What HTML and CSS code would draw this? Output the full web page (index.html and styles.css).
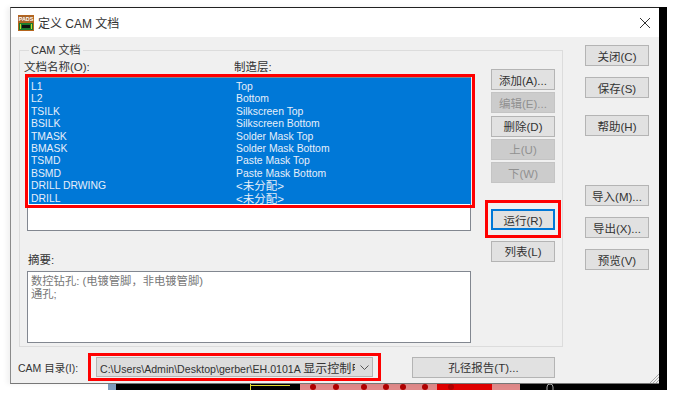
FILE: index.html
```html
<!DOCTYPE html>
<html lang="zh-CN">
<head>
  <meta charset="UTF-8">
  <meta name="viewport" content="width=device-width, initial-scale=1.0">
  <title>定义 CAM 文档</title>
  <link rel="stylesheet" href="styles.css">
</head>
<body>
<div class="screen">
  <div class="dialog">
    <div class="titlebar">
      <svg class="app-icon" width="16" height="16" viewBox="0 0 16 16">
        <rect width="16" height="16" fill="#b5651d"/>
        <rect x="1" y="1" width="14" height="6" fill="#a8642a"/>
        <text x="8" y="6" text-anchor="middle" font-size="5.4" font-weight="700" fill="#fff" font-family="Liberation Sans, sans-serif">PADS</text>
        <rect x="1" y="8" width="14" height="7" fill="#1c7a2c"/>
        <rect x="4" y="10" width="8" height="3" fill="#111"/>
        <rect x="2" y="9" width="1" height="5" fill="#c9d92e"/>
        <rect x="13" y="9" width="1" height="5" fill="#c9d92e"/>
      </svg>
      <span class="title">定义 CAM 文档</span>
      <svg class="close-x" width="10" height="10" viewBox="0 0 10 10">
        <path d="M0 0L10 10M10 0L0 10" stroke="#333" stroke-width="1" fill="none"/>
      </svg>
    </div>

    <div class="body">
      <div class="main">
        <fieldset class="group">
          <legend>CAM 文档</legend>
          <div class="group-inner">
            <div class="docs">
              <div class="list-heads">
                <span class="col-name">文档名称(O):</span>
                <span>制造层:</span>
              </div>
              <div class="list">
                <div class="rows">
                  <div class="row"><span class="col-name">L1</span><span>Top</span></div>
                  <div class="row"><span class="col-name">L2</span><span>Bottom</span></div>
                  <div class="row"><span class="col-name">TSILK</span><span>Silkscreen Top</span></div>
                  <div class="row"><span class="col-name">BSILK</span><span>Silkscreen Bottom</span></div>
                  <div class="row"><span class="col-name">TMASK</span><span>Solder Mask Top</span></div>
                  <div class="row"><span class="col-name">BMASK</span><span>Solder Mask Bottom</span></div>
                  <div class="row"><span class="col-name">TSMD</span><span>Paste Mask Top</span></div>
                  <div class="row"><span class="col-name">BSMD</span><span>Paste Mask Bottom</span></div>
                  <div class="row"><span class="col-name">DRILL DRWING</span><span class="cjk">&lt;未分配&gt;</span></div>
                  <div class="row"><span class="col-name">DRILL</span><span class="cjk">&lt;未分配&gt;</span></div>
                </div>
              </div>
              <div class="summary-label">摘要:</div>
              <div class="summary">
                <div>数控钻孔: (电镀管脚，非电镀管脚)</div>
                <div>通孔;</div>
              </div>
            </div>
            <div class="doc-buttons">
              <button class="btn">添加(A)...</button>
              <button class="btn" disabled>编辑(E)...</button>
              <button class="btn">删除(D)</button>
              <button class="btn" disabled>上(U)</button>
              <button class="btn" disabled>下(W)</button>
              <div class="run-mark"><button class="btn btn-default">运行(R)</button></div>
              <button class="btn">列表(L)</button>
            </div>
          </div>
        </fieldset>

        <div class="dir-row">
          <span class="dir-label">CAM 目录(I):</span>
          <div class="dir-mark">
            <div class="combo">
              <span class="combo-text">C:\Users\Admin\Desktop\gerber\EH.0101A <span class="combo-cjk">显示控制电路板</span></span>
              <svg width="9" height="5" viewBox="0 0 9 5"><path d="M0.5 0.5L4.5 4.5L8.5 0.5" stroke="#555" fill="none"/></svg>
            </div>
          </div>
          <button class="btn btn-report">孔径报告(T)...</button>
        </div>
      </div>

      <div class="side">
        <button class="btn">关闭(C)</button>
        <button class="btn">保存(S)</button>
        <button class="btn side-help">帮助(H)</button>
        <button class="btn side-io">导入(M)...</button>
        <button class="btn">导出(X)...</button>
        <button class="btn">预览(V)</button>
      </div>
    </div>

    <svg class="grip" width="10" height="10" viewBox="0 0 10 10">
      <path d="M1 10L10 1M4 10L10 4M7 10L10 7" stroke="#a8a8a8" fill="none"/>
    </svg>
  </div>

  <svg class="strip" width="657" height="6" viewBox="0 0 657 6">
    <rect width="98" height="6" fill="#fff"/>
    <rect x="98" width="8" height="6" fill="#7f9fc0"/>
    <rect x="240" width="1" height="6" fill="#e8e030"/>
    <rect x="240" y="1" width="40" height="1" fill="#e8e030"/>
    <rect x="290" width="220" height="6" fill="#e08a8a"/>
    <rect x="427" width="55" height="6" fill="#e00000"/>
    <g fill="#b00000">
      <circle cx="303" cy="3" r="3"/><circle cx="326" cy="3" r="3"/><circle cx="354" cy="3" r="3"/><circle cx="376" cy="3" r="3"/>
      <circle cx="393" cy="3" r="3"/><circle cx="415" cy="3" r="3"/><circle cx="441" cy="3" r="3"/>
    </g>
    <path d="M537 6V3Q537 0 540 0Q543 0 543 3V6" stroke="#aaa" fill="none"/>
  </svg>
</div>
</body>
</html>
```
FILE: styles.css
```css
body {
  margin: 0;
  background-color: #ffffff;
  font-family: "Liberation Sans", "Noto Sans CJK SC", sans-serif;
  font-size: 11.5px;
  color: #333333;
}
.screen {
  width: 657px;
  margin: 7px 0 0 10px;
  background-color: #000000;
}
.dialog {
  position: relative;
  width: 649px;
  box-sizing: border-box;
  background-color: #f0f0f0;
  border-top: 1px solid #222222;
  border-left: 1px solid #8a8a8a;
  border-bottom: 1px solid #777777;
  box-shadow: -3px 0 5px rgba(0, 0, 0, 0.06);
}
.titlebar {
  display: flex;
  align-items: center;
  height: 29px;
  padding-left: 7px;
  background-color: #ffffff;
}
.title {
  margin-left: 4px;
  font-size: 12px;
}
.close-x {
  margin-left: auto;
  margin-right: 9px;
}
.body {
  display: flex;
  padding: 7px 0 2px 8px;
}
.main {
  width: 544px;
}
.group {
  margin: 0;
  padding: 5px 0 3px 5px;
  border: 1px solid #dcdcdc;
  min-width: 0;
}
.group legend {
  margin-left: 4px;
  padding: 0 2px;
  line-height: 12px;
  font-size: 11px;
}
.group-inner {
  display: flex;
}
.docs {
  width: 446px;
}
.list-heads {
  display: flex;
  height: 12px;
  line-height: 12px;
  margin: 0 0 4px -1px;
}
.col-name {
  display: inline-block;
  width: 210px;
}
.list {
  height: 154px;
  margin-left: 2px;
  box-sizing: border-box;
  background-color: #ffffff;
  border: 1px solid #828790;
  width: 444px;
}
.rows {
  height: 123px;
  padding-top: 3px;
  background-color: #0078d7;
  color: #e6effa;
  font-size: 10.4px;
  outline: 3px solid #ff0000;
  outline-offset: 1px;
  position: relative;
  left: 1px;
}
.row {
  display: flex;
  height: 12.4px;
  line-height: 12.4px;
  padding-left: 2px;
}
.row .col-name {
  width: 205px;
}
.cjk {
  font-size: 11.5px;
}
.summary-label {
  height: 12px;
  line-height: 12px;
  margin: 23px 0 5px 3px;
}
.summary {
  height: 72px;
  margin-left: 2px;
  width: 444px;
  box-sizing: border-box;
  padding: 3px 3px;
  font-size: 11.3px;
  line-height: 13px;
  color: #777777;
  background-color: #ffffff;
  border: 1px solid #828790;
}
.doc-buttons {
  display: flex;
  flex-direction: column;
  gap: 2.25px;
  margin: 8px 0 0 20px;
}
.btn {
  display: block;
  width: 64px;
  height: 21px;
  padding: 0;
  box-sizing: border-box;
  font-family: inherit;
  font-size: 11.5px;
  color: #333333;
  background-color: #e1e1e1;
  border: 1px solid #b4b4b4;
}
.btn:disabled {
  color: #919191;
  background-color: #cccccc;
  border-color: #c4c4c4;
}
.btn-default {
  border: 2px solid #0078d7;
}
.run-mark {
  width: 76px;
  box-sizing: border-box;
  margin: 15px 0 0 -6px;
  padding: 6px 3px 5px;
  border: 3px solid #ff0000;
}
.dir-row {
  display: flex;
  align-items: center;
  margin-top: 6px;
}
.dir-label {
  width: 70px;
  margin-left: -1px;
  font-size: 10.5px;
}
.dir-mark {
  width: 293px;
  box-sizing: border-box;
  padding: 1px 5px;
  border: 3px solid #ff0000;
}
.combo {
  display: flex;
  align-items: center;
  justify-content: space-between;
  height: 20px;
  box-sizing: border-box;
  padding: 0 3px;
  background-color: #dcdcdc;
  border: 1px solid #b4b4b4;
}
.combo-text {
  width: 255px;
  overflow: hidden;
  white-space: nowrap;
  font-size: 10.6px;
}
.combo-cjk {
  font-size: 12px;
}
.btn-report {
  width: 143px;
  margin-left: 31px;
}
.side {
  display: flex;
  flex-direction: column;
  gap: 11px;
  width: 64px;
  margin: 1px 0 0 22px;
}
.side-help {
  margin-top: 6px;
}
.side-io {
  margin-top: 38px;
}
.grip {
  position: absolute;
  right: 0;
  bottom: 0;
}
.strip {
  display: block;
}
```
